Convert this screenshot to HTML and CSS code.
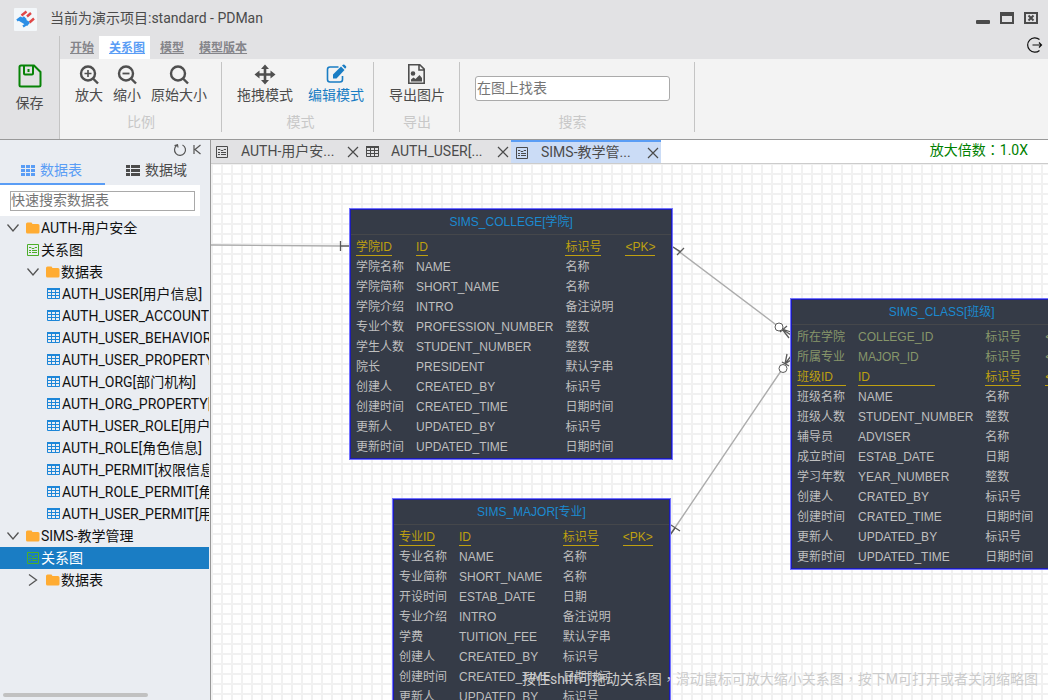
FILE: index.html
```html
<!DOCTYPE html>
<html lang="zh-CN">
<head>
<meta charset="utf-8">
<title>PDMan</title>
<link rel="stylesheet" href="styles.css">
</head>
<body>
<svg class="sprite" aria-hidden="true">
  <symbol id="i-folder" viewBox="0 0 14 14"><path fill="#ffac33" d="M1.500 1.500h4l1 1.500h5.500q1.500 0 1.500 1.500v6.500q0 1.500-1.500 1.500h-10.500q-1.500 0-1.500-1.500v-8q0-1.500 1.500-1.500z"/></symbol>
  <symbol id="i-diagram" viewBox="0 0 14 14"><path fill="none" stroke="currentColor" d="M1.500 1.500h11v11h-11zM3 4.500h2l1 1h2l1-1h2M3 7.500h2M6 7.500h5M3 9.500h2M6 9.500h5"/></symbol>
  <symbol id="i-table" viewBox="0 0 14 14"><path fill="none" stroke="currentColor" d="M1.500 1.500h12v10h-12zM1 5.500h13M1 8.500h13M5.500 2v10M9.500 2v10"/><path fill="currentColor" d="M1 1h13v2h-13z"/></symbol>
  <symbol id="i-down" viewBox="0 0 14 14"><path fill="none" stroke="#555" stroke-width="1.300" d="M1.500 3.500l5.500 6.500L12.500 3.500"/></symbol>
  <symbol id="i-right" viewBox="0 0 14 14"><path fill="none" stroke="#555" stroke-width="1.300" d="M3 1.500l7.500 5.500L3 12.500"/></symbol>
  <symbol id="i-close" viewBox="0 0 12 12"><path fill="none" stroke="currentColor" stroke-width="1.200" d="M1 1l10 10M11 1L1 11"/></symbol>
</svg>

<header class="titlebar">
  <svg class="logo" viewBox="0 0 23 23"><rect width="23" height="23" rx="1" fill="#f3f7fa"/><g fill="none" stroke-width="2.400"><path stroke="#e04848" d="M7.500 7.500l5-4M13 8.500l4-3.500M15.500 14.500l4.500-4"/><path stroke="#2c8fe6" stroke-width="4.500" d="M5.500 10.500l9 5.500"/><path stroke="#2c8fe6" d="M3 12.500l4-3M9 18.500l6-4M9 9l3 3"/></g></svg>
  <h1 class="title">当前为演示项目:standard - PDMan</h1>
  <div class="window-buttons">
    <button class="plain" aria-label="最小化"><svg width="14" height="14"><rect y="9" width="14" height="4" rx="1" fill="#4b4b4b"/></svg></button>
    <button class="plain" aria-label="最大化"><svg width="14" height="14"><rect x="1" y="2" width="12" height="10" fill="none" stroke="#4b4b4b" stroke-width="2"/><path d="M0 1h14v4H0z" fill="#4b4b4b"/></svg></button>
    <button class="plain" aria-label="关闭"><svg width="14" height="14"><rect x="1" y="2" width="12" height="10" fill="none" stroke="#4b4b4b" stroke-width="2"/><path d="M4.500 4.500l5 5M9.500 4.500l-5 5" stroke="#4b4b4b" stroke-width="2"/></svg></button>
  </div>
</header>

<div class="toolbar">
  <button class="save">
    <svg width="24" height="24" viewBox="0 0 24 24" fill="none" stroke="#078307" stroke-width="2"><path d="M3 1.500h13L22.500 8v13q0 1.500-1.500 1.500H3q-1.500 0-1.500-1.500V3q0-1.500 1.500-1.500zM6 2v7.500q0 1 1 1h7q1 0 1-1V2"/><path d="M10.500 5v3"/></svg>
    <span>保存</span>
  </button>
  <div class="ribbon">
    <div class="ribbon-head">
      <nav class="menu">
        <a href="#">开始</a><a href="#" class="active">关系图</a><a href="#">模型</a><a href="#">模型版本</a>
      </nav>
      <button class="plain" aria-label="退出"><svg width="17" height="18" fill="none" stroke="#111" stroke-width="1.200"><path d="M13.500 3.500a7.200 7.200 0 1 0 0 11M6.500 9h9M13 6.500L15.500 9L13 11.500"/></svg></button>
    </div>
    <div class="groups">
      <section class="group">
        <div class="tools">
          <button class="tool"><svg width="22" height="22" fill="none" stroke="#4f4f4f" stroke-width="2.400"><circle cx="10" cy="9.500" r="7"/><path d="M15 14.500l5 5"/><path stroke-width="1.600" d="M6.500 9.500h7M10 6v7"/></svg><span>放大</span></button>
          <button class="tool"><svg width="22" height="22" fill="none" stroke="#4f4f4f" stroke-width="2.400"><circle cx="10" cy="9.500" r="7"/><path d="M15 14.500l5 5"/><path stroke-width="1.800" d="M6.500 9.500h7"/></svg><span>缩小</span></button>
          <button class="tool"><svg width="22" height="22" fill="none" stroke="#4f4f4f" stroke-width="2.400"><circle cx="10" cy="9.500" r="7"/><path d="M15 14.500l5 5"/></svg><span>原始大小</span></button>
        </div>
        <h2>比例</h2>
      </section>
      <section class="group modes">
        <div class="tools">
          <button class="tool"><svg width="22" height="22" fill="#4f4f4f"><path d="M11 .5l4 4.500h-2.700v4.200h4.200V6.500L21.500 10.500l-5 4v-2.700h-4.200v4.200H15L11 20.500l-4-4.500h2.700v-4.200H5.500v2.700L.5 10.500l5-4v2.700h4.200V5H7z"/></svg><span>拖拽模式</span></button>
          <button class="tool on"><svg width="22" height="22" fill="none" stroke="#1a7dc4" stroke-width="1.600"><path d="M13.500 3H5Q2.500 3 2.500 5.500v10Q2.500 18 5 18h10q2.500 0 2.500-2.500V12"/><path fill="#1a7dc4" stroke="none" d="M8 14.500v-4L16 2.500l3.500 3.500-8 8.500zM17 1.500l1-.8q.8-.5 1.500 0l1.500 1.600q.7.700 0 1.500l-.9 1z"/></svg><span>编辑模式</span></button>
        </div>
        <h2>模式</h2>
      </section>
      <section class="group">
        <div class="tools">
          <button class="tool"><svg width="22" height="22" fill="none" stroke="#4f4f4f" stroke-width="1.600"><path d="M2.800 .8h11l4.400 4.400v14H2.800zM13 1v5h5"/><circle cx="7" cy="9.500" r="1.500" fill="#4f4f4f"/><path fill="#4f4f4f" stroke="none" d="M5 17.500v-2l2.500-2 2 1.500 4-4L16 14v3.500z"/></svg><span>导出图片</span></button>
        </div>
        <h2>导出</h2>
      </section>
      <section class="group search">
        <div class="tools"><input type="text" placeholder="在图上找表" aria-label="在图上找表"></div>
        <h2>搜索</h2>
      </section>
    </div>
  </div>
</div>

<div class="body">
  <aside class="sidebar">
    <div class="side-actions">
      <button class="plain" aria-label="刷新"><svg width="14" height="14" fill="none" stroke="#555" stroke-width="1.200"><path d="M9.500 2A5.500 5.500 0 1 1 4 2.300M1.500 2.500L4.500 1.800L5 4.500"/></svg></button>
      <button class="plain" aria-label="收起"><svg width="10" height="12" fill="none" stroke="#555" stroke-width="1.200"><path d="M2 1v9M8.500 1L3 5.500l5.500 4.500"/></svg></button>
    </div>
    <div class="side-tabs">
      <button class="active"><svg width="14" height="12" fill="currentColor"><path d="M0 1h4v3H0zM5 1h4v3H5zM10 1h4v3h-4zM0 5h4v3H0zM5 5h4v3H5zM10 5h4v3h-4zM0 9h4v3H0zM5 9h4v3H5zM10 9h4v3h-4z"/></svg>数据表</button>
      <button><svg width="14" height="12" fill="currentColor"><path d="M0 1h4v3H0zM5 1h9v3H5zM0 5h4v3H0zM5 5h9v3H5zM0 9h4v3H0zM5 9h9v3H5z"/></svg>数据域</button>
    </div>
    <div class="side-search"><input type="text" placeholder="快速搜索数据表" aria-label="快速搜索数据表"></div>
    <ul class="tree">
      <li><svg class="ic"><use href="#i-down"/></svg><svg class="ic next"><use href="#i-folder"/></svg>AUTH-用户安全</li>
      <li class="l1"><svg class="ic green"><use href="#i-diagram"/></svg>关系图</li>
      <li class="l1"><svg class="ic"><use href="#i-down"/></svg><svg class="ic next"><use href="#i-folder"/></svg>数据表</li>
      <li class="l2"><svg class="ic blue"><use href="#i-table"/></svg>AUTH_USER[用户信息]</li>
      <li class="l2"><svg class="ic blue"><use href="#i-table"/></svg>AUTH_USER_ACCOUNT[用户账户]</li>
      <li class="l2"><svg class="ic blue"><use href="#i-table"/></svg>AUTH_USER_BEHAVIOR[用户行为]</li>
      <li class="l2"><svg class="ic blue"><use href="#i-table"/></svg>AUTH_USER_PROPERTY[用户属性]</li>
      <li class="l2"><svg class="ic blue"><use href="#i-table"/></svg>AUTH_ORG[部门机构]</li>
      <li class="l2"><svg class="ic blue"><use href="#i-table"/></svg>AUTH_ORG_PROPERTY[机构属性]</li>
      <li class="l2"><svg class="ic blue"><use href="#i-table"/></svg>AUTH_USER_ROLE[用户角色]</li>
      <li class="l2"><svg class="ic blue"><use href="#i-table"/></svg>AUTH_ROLE[角色信息]</li>
      <li class="l2"><svg class="ic blue"><use href="#i-table"/></svg>AUTH_PERMIT[权限信息]</li>
      <li class="l2"><svg class="ic blue"><use href="#i-table"/></svg>AUTH_ROLE_PERMIT[角色权限]</li>
      <li class="l2"><svg class="ic blue"><use href="#i-table"/></svg>AUTH_USER_PERMIT[用户权限]</li>
      <li><svg class="ic"><use href="#i-down"/></svg><svg class="ic next"><use href="#i-folder"/></svg>SIMS-教学管理</li>
      <li class="l1 selected"><svg class="ic green"><use href="#i-diagram"/></svg>关系图</li>
      <li class="l1"><svg class="ic"><use href="#i-right"/></svg><svg class="ic next"><use href="#i-folder"/></svg>数据表</li>
    </ul>
    <div class="scrollbar"></div>
  </aside>

  <main class="work">
    <div class="doc-bar">
      <div class="doc"><svg class="ic"><use href="#i-diagram"/></svg><span>AUTH-用户安...</span><button class="plain" aria-label="关闭"><svg width="12" height="12"><use href="#i-close"/></svg></button></div>
      <div class="doc"><svg class="ic"><use href="#i-table"/></svg><span>AUTH_USER[...</span><button class="plain" aria-label="关闭"><svg width="12" height="12"><use href="#i-close"/></svg></button></div>
      <div class="doc active"><svg class="ic"><use href="#i-diagram"/></svg><span>SIMS-教学管...</span><button class="plain" aria-label="关闭"><svg width="12" height="12"><use href="#i-close"/></svg></button></div>
      <p class="zoom">放大倍数：1.0X</p>
    </div>
    <div class="canvas">
      <svg class="edges" fill="none">
        <g stroke="#acacac" stroke-width="1.400"><path d="M0 81L130 82M462 83L568 163M459 371L572 204"/></g>
        <g stroke="#5a5a5a" stroke-width="1.300"><path d="M129 82h10M129.500 77v10M462 83l8 5M466 91l7-7M459 371l5-7M460 361l9 6"/><path d="M580 168l-9-3l9 6M571 165l7 9M569 168l7-6M580 192l-6 8l2-10M574 200l6-4M571 198l7 4"/><circle cx="568" cy="163" r="4" fill="#fff" stroke-width="1"/><circle cx="572" cy="204.500" r="4" fill="#fff" stroke-width="1"/></g>
      </svg>

      <article class="node college">
        <h3>SIMS_COLLEGE[学院]</h3>
        <table>
          <tr class="pk"><td><span>学院ID</span></td><td><span>ID</span></td><td><span>标识号</span></td><td><span>&lt;PK&gt;</span></td></tr>
          <tr><td>学院名称</td><td>NAME</td><td>名称</td><td></td></tr>
          <tr><td>学院简称</td><td>SHORT_NAME</td><td>名称</td><td></td></tr>
          <tr><td>学院介绍</td><td>INTRO</td><td>备注说明</td><td></td></tr>
          <tr><td>专业个数</td><td>PROFESSION_NUMBER</td><td>整数</td><td></td></tr>
          <tr><td>学生人数</td><td>STUDENT_NUMBER</td><td>整数</td><td></td></tr>
          <tr><td>院长</td><td>PRESIDENT</td><td>默认字串</td><td></td></tr>
          <tr><td>创建人</td><td>CREATED_BY</td><td>标识号</td><td></td></tr>
          <tr><td>创建时间</td><td>CREATED_TIME</td><td>日期时间</td><td></td></tr>
          <tr><td>更新人</td><td>UPDATED_BY</td><td>标识号</td><td></td></tr>
          <tr><td>更新时间</td><td>UPDATED_TIME</td><td>日期时间</td><td></td></tr>
        </table>
      </article>

      <article class="node class">
        <h3>SIMS_CLASS[班级]</h3>
        <table>
          <tr class="fk"><td>所在学院</td><td>COLLEGE_ID</td><td>标识号</td><td>&lt;FK&gt;</td></tr>
          <tr class="fk"><td>所属专业</td><td>MAJOR_ID</td><td>标识号</td><td>&lt;FK&gt;</td></tr>
          <tr class="pk"><td><span class="w-name">班级ID</span></td><td><span class="w-code">ID</span></td><td><span>标识号</span></td><td><span>&lt;PK&gt;</span></td></tr>
          <tr><td>班级名称</td><td>NAME</td><td>名称</td><td></td></tr>
          <tr><td>班级人数</td><td>STUDENT_NUMBER</td><td>整数</td><td></td></tr>
          <tr><td>辅导员</td><td>ADVISER</td><td>名称</td><td></td></tr>
          <tr><td>成立时间</td><td>ESTAB_DATE</td><td>日期</td><td></td></tr>
          <tr><td>学习年数</td><td>YEAR_NUMBER</td><td>整数</td><td></td></tr>
          <tr><td>创建人</td><td>CRATED_BY</td><td>标识号</td><td></td></tr>
          <tr><td>创建时间</td><td>CRATED_TIME</td><td>日期时间</td><td></td></tr>
          <tr><td>更新人</td><td>UPDATED_BY</td><td>标识号</td><td></td></tr>
          <tr><td>更新时间</td><td>UPDATED_TIME</td><td>日期时间</td><td></td></tr>
        </table>
      </article>

      <article class="node major">
        <h3>SIMS_MAJOR[专业]</h3>
        <table>
          <tr class="pk"><td><span>专业ID</span></td><td><span>ID</span></td><td><span>标识号</span></td><td><span>&lt;PK&gt;</span></td></tr>
          <tr><td>专业名称</td><td>NAME</td><td>名称</td><td></td></tr>
          <tr><td>专业简称</td><td>SHORT_NAME</td><td>名称</td><td></td></tr>
          <tr><td>开设时间</td><td>ESTAB_DATE</td><td>日期</td><td></td></tr>
          <tr><td>专业介绍</td><td>INTRO</td><td>备注说明</td><td></td></tr>
          <tr><td>学费</td><td>TUITION_FEE</td><td>默认字串</td><td></td></tr>
          <tr><td>创建人</td><td>CREATED_BY</td><td>标识号</td><td></td></tr>
          <tr><td>创建时间</td><td>CREATED_TIME</td><td>日期时间</td><td></td></tr>
          <tr><td>更新人</td><td>UPDATED_BY</td><td>标识号</td><td></td></tr>
          <tr><td>更新时间</td><td>UPDATED_TIME</td><td>日期时间</td><td></td></tr>
        </table>
      </article>

      <p class="hint">按住shift可拖动关系图，滑动鼠标可放大缩小关系图，按下M可打开或者关闭缩略图</p>
    </div>
  </main>
</div>
</body>
</html>
```

FILE: styles.css
```css
* { box-sizing: border-box; }

body {
  margin: 0;
  height: 100vh;
  display: flex;
  flex-direction: column;
  overflow: hidden;
  background: #e2e2e4;
  color: #4b4b4b;
  font: 14px/20px Roboto, "Noto Sans CJK SC", sans-serif;
}

h1, h2, h3, p, ul { margin: 0; padding: 0; font-weight: 400; font-size: inherit; }
ul { list-style: none; }
button, input { font: inherit; color: inherit; }
button { border: 0; padding: 0; background: none; }
svg { display: block; flex: none; }
.sprite { position: absolute; width: 0; height: 0; }
.plain { display: block; flex: none; }
.ic { width: 14px; height: 14px; }

/* title bar */
.titlebar { display: flex; align-items: center; height: 36px; padding: 0 10px 0 14px; }
.logo { width: 23px; height: 23px; margin-top: 2px; }
.title { margin-left: 13px; flex: 1; }
.window-buttons { display: flex; gap: 10px; }

/* toolbar */
.toolbar { display: flex; height: 104px; border-bottom: 1px solid #999; }
.save {
  width: 60px;
  display: flex;
  flex-direction: column;
  align-items: center;
  padding-top: 28px;
  gap: 6px;
  border-right: 1px solid #c4c4c4;
  line-height: 18px;
}
.ribbon { flex: 1; display: flex; flex-direction: column; }
.ribbon-head { display: flex; justify-content: space-between; padding-right: 5px; }
.ribbon-head .plain { height: 18px; }
.menu { display: flex; }
.menu a { padding: 2px 5px 1px 10px; font-size: 12px; font-weight: 700; color: #85858a; }
.menu .active { background: #fff; color: #5a9df5; }
.groups { flex: 1; display: flex; padding: 3px 0 7px; background: #f3f3f3; }
.group { display: flex; flex-direction: column; padding: 0 14px 0 15px; border-right: 1px solid #c4c4c4; }
.group h2 { text-align: center; color: #c8c8c8; }
.tools { display: flex; gap: 10px; height: 50px; }
.tool { display: flex; flex-direction: column; align-items: center; padding-top: 2px; line-height: 18px; }
.tool.on { color: #1a7dc4; }
.modes { padding-right: 9px; }
.modes .tools { gap: 15px; }
.search { padding-right: 24px; }
.search input {
  width: 195px;
  height: 25px;
  margin-top: 14px;
  padding: 0 1px 1px;
  border: 1px solid #aaa;
  border-radius: 3px;
  background: #fff;
}
input::placeholder { color: #757575; opacity: 1; }

.body { flex: 1; display: flex; min-height: 0; }

/* sidebar */
.sidebar {
  width: 211px;
  display: flex;
  flex-direction: column;
  flex: none;
  background: #eaedf2;
  border-right: 1px solid #999;
}
.side-actions { display: flex; justify-content: flex-end; align-items: center; gap: 5px; height: 19px; padding-right: 8px; }
.side-tabs { display: flex; }
.side-tabs button { flex: 1; display: flex; justify-content: center; align-items: center; gap: 5px; height: 26px; padding: 0 2px 2px 0; border-bottom: 2px solid transparent; }
.side-tabs .active { color: #5a9df5; border-color: #5a9df5; }
.side-search { width: 200px; padding: 6px 5px 5px 10px; background: #fff; }
.side-search input { display: block; width: 100%; height: 20px; padding: 0 0 2px; border: 1px solid #a9a9a9; background: #fff; }
.tree { flex: 1; margin-right: 1px; padding-top: 1px; overflow: hidden; color: #111; }
.tree li { display: flex; align-items: center; gap: 1px; height: 22px; padding-left: 6px; white-space: nowrap; }
.tree .l1 { padding-left: 26px; }
.tree .l2 { gap: 2px; padding-left: 46px; }
.tree .next { margin-left: 5px; }
.tree .selected { background: #1a7dc4; color: #fff; }
.green { color: #4cae2a; }
.blue { color: #1d86d8; }
.scrollbar { width: 145px; height: 4px; margin: 0 0 3px 3px; border-radius: 2px; background: #c1c1c1; }

/* documents */
.work { flex: 1; min-width: 0; display: flex; flex-direction: column; background: #fff; }
.doc-bar { display: flex; height: 24px; border-bottom: 1px solid #ccc; }
.doc { display: flex; align-items: center; width: 150px; padding: 0 2px 0 4px; background: #e2e2e4; }
.doc span { flex: 1; margin-left: 12px; padding-bottom: 2px; white-space: nowrap; }
.doc.active { border-top: 2px solid #5a9df5; background: #cbdcf6; }
.zoom, .hint { font-family: Roboto, "Noto Sans CJK TC", sans-serif; font-feature-settings: "locl" 0; }
.zoom { margin-left: auto; padding-right: 20px; color: #008000; }

/* diagram */
.canvas {
  position: relative;
  flex: 1;
  overflow: hidden;
  background-image:
    linear-gradient(90deg, #f1f1f1 2px, transparent 2px),
    linear-gradient(#f1f1f1 2px, transparent 2px);
  background-size: 10px 10px;
  background-position: 0 -1px;
}
.edges { position: absolute; left: 0; top: 0; width: 100%; height: 100%; }
.node {
  position: absolute;
  padding-bottom: 1px;
  border: 1px solid #7272ff;
  box-shadow: inset 0 0 0 1px #1c1cb4;
  background: #353b47;
  color: #bfbfbf;
  font: 12px/20px "Liberation Sans", "Noto Sans CJK SC", sans-serif;
}
.college { left: 138px; top: 44px; }
.class { left: 579px; top: 134px; }
.major { left: 181px; top: 334px; }
.node h3 { margin: 0 1px; padding: 3px 0 2px; border-bottom: 1px solid #45474b; text-align: center; color: #1b8ad0; }
.node table { margin: 2px 0 1px 6px; border-spacing: 0; }
.node td { height: 20px; padding: 1px 12px 0 0; line-height: 18px; vertical-align: top; white-space: nowrap; }
.node td:last-child { padding-right: 17px; }
.node span { display: block; width: fit-content; height: 18px; border-bottom: 1px solid #bfa010; }
.node .w-name { width: 49px; }
.node .w-code { width: 77px; }
.pk { color: #bfa010; }
.fk { color: #87966a; }
.hint {
  position: absolute;
  right: 10px;
  bottom: 11px;
  color: #ccc;
  white-space: nowrap;
}
```
